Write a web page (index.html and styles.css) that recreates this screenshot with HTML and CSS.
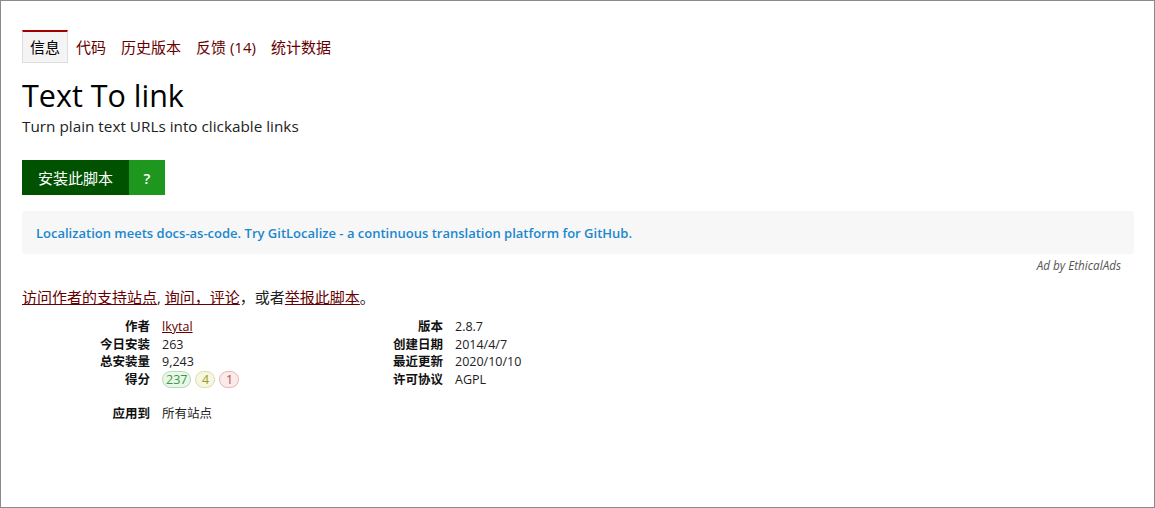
FILE: index.html
```html
<!DOCTYPE html>
<html lang="zh-CN">
<head>
<meta charset="utf-8">
<title>Text To link</title>
<link rel="stylesheet" href="styles.css">
</head>
<body>
<div class="frame">
  <ul class="tabs">
    <li class="tab active">信息</li>
    <li class="tab"><a href="#">代码</a></li>
    <li class="tab"><a href="#">历史版本</a></li>
    <li class="tab"><a href="#">反馈 (14)</a></li>
    <li class="tab"><a href="#">统计数据</a></li>
  </ul>
  <h2 class="title">Text To link</h2>
  <p class="desc">Turn plain text URLs into clickable links</p>
  <div class="install">
    <a class="install-main" href="#">安装此脚本</a><a class="install-help" href="#">?</a>
  </div>
  <div class="ad">
    <a href="#">Localization meets docs-as-code. Try GitLocalize - a continuous translation platform for GitHub.</a>
  </div>
  <div class="ad-by">Ad by EthicalAds</div>
  <p class="links"><a href="#">访问作者的支持站点</a>, <a href="#">询问，评论</a>，或者<a href="#">举报此脚本</a>。</p>
  <div class="stats">
    <dl class="group">
      <dt>作者</dt><dd><a href="#">lkytal</a></dd>
      <dt>今日安装</dt><dd>263</dd>
      <dt>总安装量</dt><dd>9,243</dd>
      <dt>得分</dt><dd class="scores"><span class="badge good">237</span><span class="badge ok">4</span><span class="badge bad">1</span></dd>
    </dl>
    <dl class="group">
      <dt>版本</dt><dd>2.8.7</dd>
      <dt>创建日期</dt><dd>2014/4/7</dd>
      <dt>最近更新</dt><dd>2020/10/10</dd>
      <dt>许可协议</dt><dd>AGPL</dd>
    </dl>
  </div>
  <dl class="group applies">
    <dt>应用到</dt><dd>所有站点</dd>
  </dl>
</div>
</body>
</html>
```
FILE: styles.css
```css
html, body {
  margin: 0;
  padding: 0;
  background: #fff;
}
body {
  font-family: "Open Sans", "Noto Sans CJK SC", sans-serif;
  color: #222;
}
.frame {
  box-sizing: border-box;
  width: 1155px;
  height: 508px;
  border: 1px solid #8a8a8a;
  padding: 29px 20px 0 21px;
  overflow: hidden;
}
a {
  color: #670000;
}
.tabs {
  list-style: none;
  margin: 0;
  padding: 0;
  display: flex;
  font-size: 15px;
}
.tab {
  height: 33px;
  box-sizing: border-box;
  padding: 0 7px 3px 8px;
  display: flex;
  align-items: center;
  border-top: 2px solid transparent;
}
.tab a {
  text-decoration: none;
}
.tab.active {
  background: #f4f4f4;
  border-top: 2px solid #a00000;
  border-left: 1px solid #ddd;
  border-right: 1px solid #ddd;
  border-bottom: 1px solid #ddd;
  padding: 0 7px 2px;
  color: #000;
}
.title {
  margin: 12px 0 0;
  font-size: 30.5px;
  font-weight: 500;
  color: #000;
  line-height: 40px;
}
.desc {
  margin: 1px 0 0;
  font-size: 15.3px;
  line-height: 20px;
  color: #222;
}
.install {
  display: flex;
  margin-top: 24px;
  height: 35px;
}
.install a {
  color: #fff;
  text-decoration: none;
  font-size: 15px;
  display: flex;
  align-items: center;
  justify-content: center;
}
.install-main {
  background: #005200;
  width: 107px;
}
.install-help {
  background: #1e971e;
  width: 36px;
  font-weight: 600;
}
.ad {
  margin-top: 16px;
  background: #f7f7f7;
  border-radius: 3px;
  height: 43px;
  box-sizing: border-box;
  padding: 0 14px;
  display: flex;
  align-items: center;
}
.ad a {
  color: #1a87cf;
  font-weight: 600;
  font-size: 13px;
  text-decoration: none;
}
.ad-by {
  text-align: right;
  padding-right: 13px;
  font-size: 11.7px;
  font-style: italic;
  color: #555;
  margin-top: 3px;
  line-height: 16px;
}
.links {
  margin: 14px 0 0;
  font-size: 15px;
  line-height: 20px;
  color: #222;
}
.stats {
  display: flex;
  margin-top: 11px;
}
.group {
  display: grid;
  grid-template-columns: 128px 1fr;
  column-gap: 12px;
  width: 293px;
  margin: 0;
  font-size: 12.5px;
  line-height: 17.5px;
}
.group dt {
  font-weight: 700;
  text-align: right;
  color: #111;
}
.group dd {
  margin: 0;
  color: #222;
}
.scores {
  display: flex;
  gap: 4px;
  align-items: center;
}
.applies {
  margin-top: 17px;
}
.badge {
  display: inline-block;
  box-sizing: border-box;
  border-radius: 9px;
  border: 1px solid;
  padding: 0 3px;
  min-width: 20px;
  text-align: center;
  line-height: 15px;
  font-size: 12.5px;
}
.badge.good {
  background: #e9f6e9;
  border-color: #b2dcb2;
  color: #3a9a3a;
}
.badge.ok {
  background: #f7f7e1;
  border-color: #dcdca8;
  color: #9a9a30;
}
.badge.bad {
  background: #fbeaea;
  border-color: #e6b3b3;
  color: #b34a4a;
}
```
